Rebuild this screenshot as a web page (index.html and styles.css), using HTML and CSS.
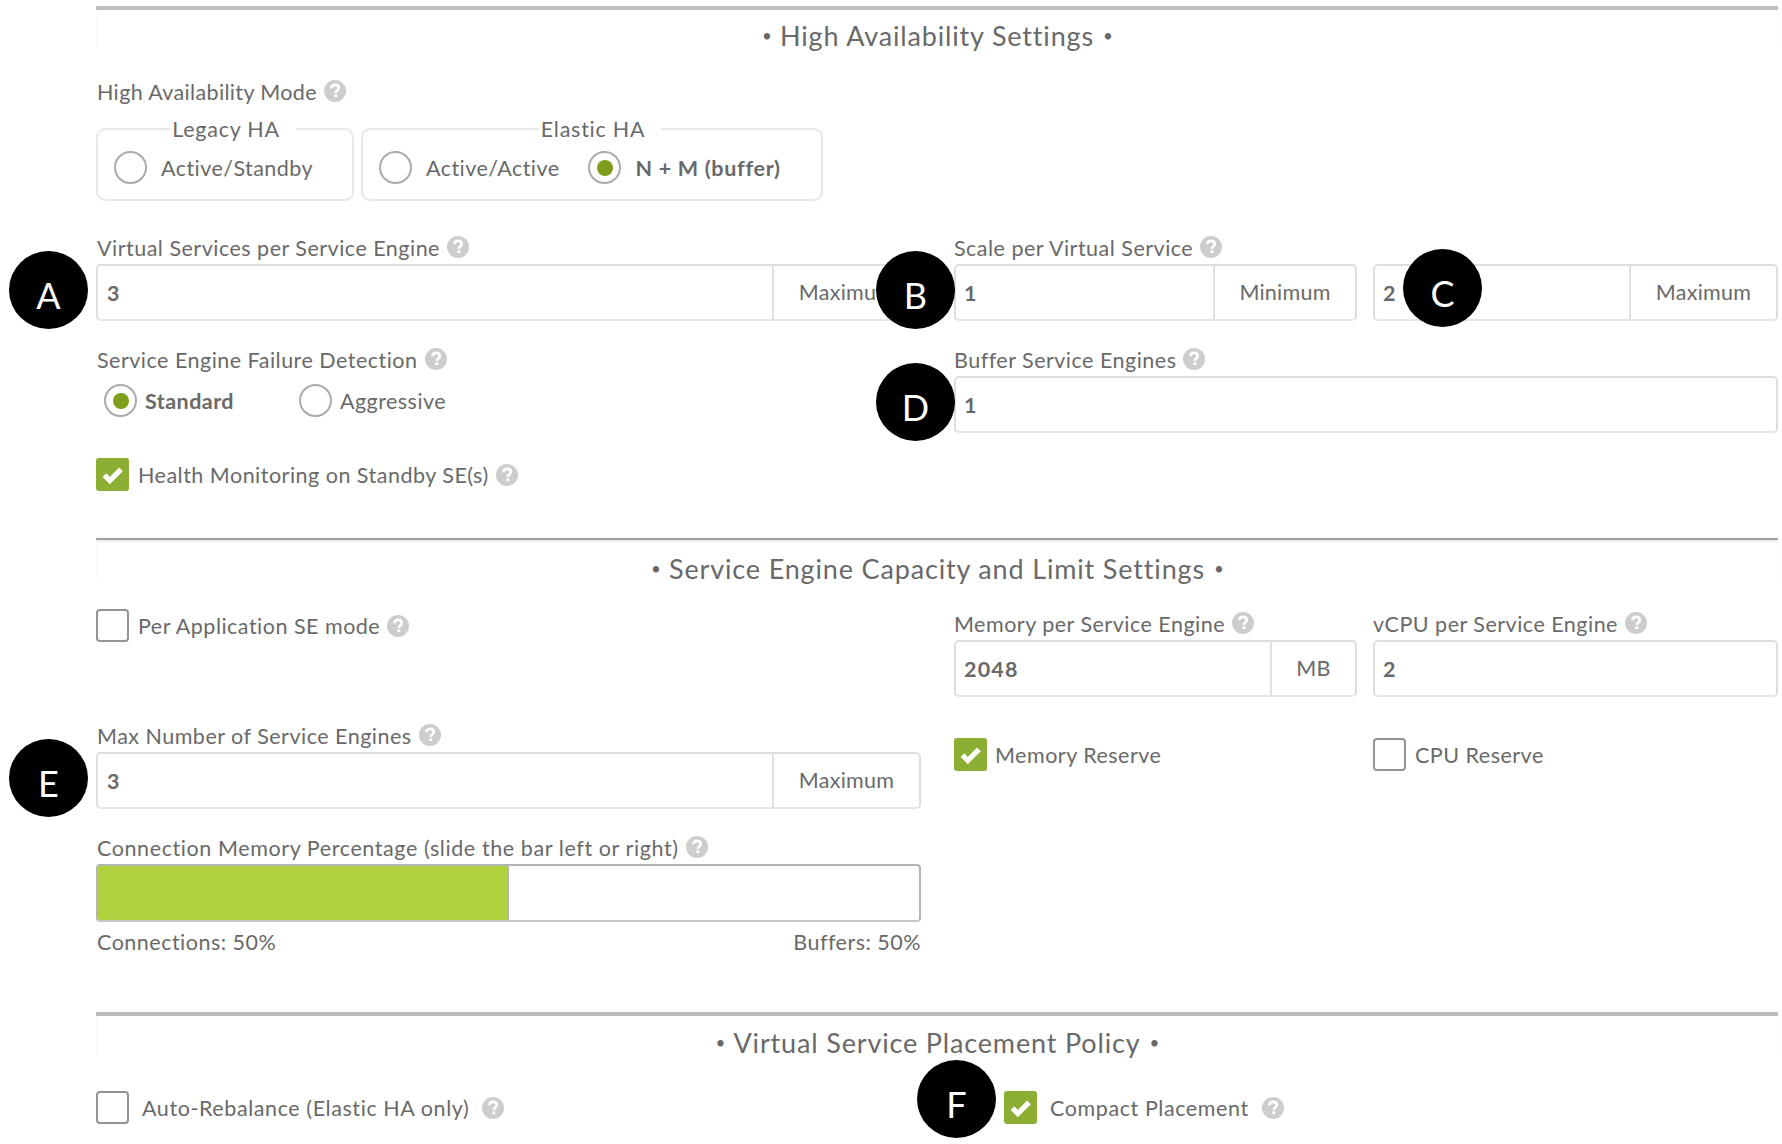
FILE: index.html
```html
<!DOCTYPE html>
<html lang="en">
<head>
<meta charset="utf-8">
<title>Service Engine Group</title>
<link rel="stylesheet" href="styles.css">
</head>
<body>
<svg width="0" height="0" class="defs">
  <symbol id="help" viewBox="0 0 22 22">
    <circle cx="11" cy="11" r="11" fill="#cdcdcd"/>
    <path d="M7.4 8.2C7.5 6 9 4.9 11.1 4.9c2.1 0 3.6 1.2 3.6 3 0 2.6-2.9 2.6-2.9 5" fill="none" stroke="#fff" stroke-width="2.7"/>
    <rect x="10.4" y="14.4" width="2.8" height="2.8" fill="#fff"/>
  </symbol>
  <symbol id="check" viewBox="0 0 32 32">
    <path d="M8.2 16.6l5.2 5.2L24.2 11" fill="none" stroke="#fff" stroke-width="5"/>
  </symbol>
</svg>
<main class="page">

  <section class="section section-ha">
    <h2 class="title"><span class="dot">•</span>High Availability Settings<span class="dot">•</span></h2>
    <div class="label mode-label"><span>High Availability Mode</span><svg class="help"><use href="#help"/></svg></div>
    <div class="modes">
      <fieldset class="mode legacy">
        <legend>Legacy HA</legend>
        <div class="choices">
          <span class="radio"></span><span class="choice">Active/Standby</span>
        </div>
      </fieldset>
      <fieldset class="mode elastic">
        <legend>Elastic HA</legend>
        <div class="choices">
          <span class="radio"></span><span class="choice">Active/Active</span>
          <span class="radio on"></span><span class="choice strong">N + M (buffer)</span>
        </div>
      </fieldset>
    </div>
    <div class="columns">
      <div class="column">
        <div class="field">
          <div class="label"><span>Virtual Services per Service Engine</span><svg class="help"><use href="#help"/></svg></div>
          <div class="input"><span class="value">3</span><span class="addon addon-max">Maximum</span></div>
          <span class="badge badge-a">A</span>
        </div>
        <div class="field">
          <div class="label"><span>Service Engine Failure Detection</span><svg class="help"><use href="#help"/></svg></div>
          <div class="detection">
            <span class="radio on"></span><span class="choice strong">Standard</span>
            <span class="radio"></span><span class="choice">Aggressive</span>
          </div>
        </div>
        <div class="checkline"><span class="box on"><svg><use href="#check"/></svg></span><span>Health Monitoring on Standby SE(s)</span><svg class="help"><use href="#help"/></svg></div>
      </div>
      <div class="column right">
        <div class="field">
          <div class="label"><span>Scale per Virtual Service</span><svg class="help"><use href="#help"/></svg></div>
          <div class="pair">
            <div class="input"><span class="value">1</span><span class="addon addon-min">Minimum</span></div>
            <div class="input"><span class="value">2</span><span class="addon addon-max">Maximum</span></div>
          </div>
          <span class="badge badge-b">B</span>
          <span class="badge badge-c">C</span>
        </div>
        <div class="field">
          <div class="label"><span>Buffer Service Engines</span><svg class="help"><use href="#help"/></svg></div>
          <div class="input"><span class="value">1</span></div>
          <span class="badge badge-d">D</span>
        </div>
      </div>
    </div>
  </section>

  <section class="section section-capacity">
    <h2 class="title"><span class="dot">•</span>Service Engine Capacity and Limit Settings<span class="dot">•</span></h2>
    <div class="columns">
      <div class="column">
        <div class="checkline app-mode"><span class="box"></span><span>Per Application SE mode</span><svg class="help"><use href="#help"/></svg></div>
        <div class="field">
          <div class="label"><span>Max Number of Service Engines</span><svg class="help"><use href="#help"/></svg></div>
          <div class="input"><span class="value">3</span><span class="addon addon-max">Maximum</span></div>
          <span class="badge badge-e">E</span>
        </div>
        <div class="field">
          <div class="label slider-label"><span>Connection Memory Percentage (slide the bar left or right)</span><svg class="help"><use href="#help"/></svg></div>
          <div class="slider"><div class="fill" style="width:50%"></div></div>
          <div class="captions"><span>Connections: 50%</span><span>Buffers: 50%</span></div>
        </div>
      </div>
      <div class="column right">
        <div class="pair">
          <div class="field">
            <div class="label"><span>Memory per Service Engine</span><svg class="help"><use href="#help"/></svg></div>
            <div class="input"><span class="value">2048</span><span class="addon addon-mb">MB</span></div>
          </div>
          <div class="field">
            <div class="label"><span>vCPU per Service Engine</span><svg class="help"><use href="#help"/></svg></div>
            <div class="input"><span class="value">2</span></div>
          </div>
        </div>
        <div class="pair reserves">
          <div class="checkline memory"><span class="box on"><svg><use href="#check"/></svg></span><span>Memory Reserve</span></div>
          <div class="checkline"><span class="box"></span><span>CPU Reserve</span></div>
        </div>
      </div>
    </div>
  </section>

  <section class="section section-placement">
    <h2 class="title"><span class="dot">•</span>Virtual Service Placement Policy<span class="dot">•</span></h2>
    <div class="placement">
      <div class="checkline"><span class="box"></span><span>Auto-Rebalance (Elastic HA only)</span><svg class="help"><use href="#help"/></svg></div>
      <div class="checkline"><span class="box on"><svg><use href="#check"/></svg></span><span>Compact Placement</span><svg class="help"><use href="#help"/></svg></div>
      <span class="badge badge-f">F</span>
    </div>
  </section>

</main>
</body>
</html>
```

FILE: styles.css
```css
* { box-sizing: border-box; }

body {
  margin: 0;
  background: #fff;
  color: #696969;
  font: 21.5px/26px Lato, "Liberation Sans", sans-serif;
  letter-spacing: 0.49px;
  overflow: hidden;
}

.defs { display: block; }

.page { width: 1682px; height: 1144px; margin-left: 96px; padding-top: 6px; }

/* Sections */
.section { display: flex; flex-direction: column; }
.section-ha { height: 532px; border-top: 4px solid #bfbfbf; }
.section-capacity { height: 474px; border-top: 2px solid #9f9f9f; box-shadow: inset 0 2px #ebebeb, 0 -2px #f8f8f8; }
.section-placement { height: 132px; border-top: 4px solid #bcbcbc; }

.title {
  display: flex;
  justify-content: center;
  gap: 9px;
  margin: 0;
  height: 40px;
  border: solid #f9f9f9;
  border-width: 0 1px;
  font-size: 27px;
  font-weight: 400;
  line-height: 52px;
  letter-spacing: 0.84px;
}
.section-capacity .title, .section-placement .title { line-height: 54px; }
.section-capacity .title { line-height: 57px; }
.dot { width: 9px; font-size: 17px; text-align: center; letter-spacing: 0; }

.columns { display: grid; grid-template-columns: 825px 824px; column-gap: 33px; }
.column { display: flex; flex-direction: column; }
.pair { display: grid; grid-template-columns: 403px 405px; column-gap: 16px; }

/* Labels and inputs */
.field { position: relative; margin-bottom: 21px; }
.label { display: flex; align-items: center; gap: 7px; height: 34px; padding-left: 1px; white-space: nowrap; }
.label > span { padding-top: 2px; }
.right .label { padding-left: 0; }
.help { flex: none; width: 22px; height: 22px; }

.input {
  display: flex;
  height: 57px;
  border: 2px solid #dedede;
  border-bottom-color: #e6e6e6;
  border-radius: 5px;
}
.value { flex: 1; padding-left: 9px; font-weight: 700; line-height: 54px; letter-spacing: 1.2px; }
.right .value { padding-left: 8px; }
.addon {
  border-left: 2px solid #e0e0e0;
  line-height: 53px;
  text-align: center;
  letter-spacing: 0.25px;
}
.addon-max { width: 147px; }
.addon-min { width: 142px; }
.addon-mb { width: 85px; }

/* High availability mode */
.mode-label { margin-top: 24px; letter-spacing: 0.36px; }
.modes { display: flex; gap: 7px; margin: 8px 0 29px; }
.mode {
  margin: 0;
  padding: 0 0 5px 16px;
  height: 85px;
  border: 2px solid #e8e8e8;
  border-radius: 9px;
}
.mode legend { margin: 0 auto; padding: 0 9px; position: relative; left: -7px; letter-spacing: 0.75px; }
.legacy { width: 258px; }
.elastic { width: 462px; }
.choices, .detection { display: flex; align-items: center; }
.choices { height: 51px; }
.detection { height: 49px; padding-left: 8px; }

.radio {
  flex: none;
  display: flex;
  align-items: center;
  justify-content: center;
  width: 33px;
  height: 33px;
  border: 2px solid #aaa;
  border-radius: 50%;
}
.radio.on::after { content: ""; width: 16px; height: 16px; border-radius: 50%; background: #7f9f1c; }
.choice { margin: 1px 29px 0 14px; letter-spacing: 0.45px; }
.choices .strong { letter-spacing: 0.7px; }
.strong { font-weight: 700; }
.detection .choice { margin: 1px 65px 0 8px; }

/* Checkboxes */
.checkline { display: flex; align-items: center; height: 33px; white-space: nowrap; }
.checkline .help { margin-left: 7px; }
.box {
  flex: none;
  width: 33px;
  height: 33px;
  margin-right: 9px;
  border: 2px solid #949494;
  border-radius: 4px;
}
.box.on { border: 0; background: #8bae33; border-radius: 3px; }
.box svg { display: block; width: 33px; height: 33px; }
.section-ha .checkline { margin-top: 12px; }

/* Capacity */
.section-capacity .columns { margin-top: 26px; }
.app-mode { margin: 3px 0 76px; }
.reserves { margin-top: 20px; }
.memory .box { margin-right: 8px; }

.slider-label > span { letter-spacing: 0.59px; }
.slider {
  height: 58px;
  border: 2px solid #b4b4b4;
  border-bottom-color: #c6c6c6;
  border-radius: 4px;
  overflow: hidden;
}
.fill { height: 100%; background: #afd13d; border-right: 2px solid #b4b4b4; }
.captions { display: flex; justify-content: space-between; padding: 7px 0 0 1px; }

/* Placement */
.placement {
  position: relative;
  display: grid;
  grid-template-columns: 908px 1fr;
  margin-top: 35px;
  letter-spacing: 0.58px;
}
.placement .box { margin-right: 13px; }
.placement .help { margin-left: 13px; }

/* Callout markers */
.badge {
  position: absolute;
  width: 79px;
  height: 78px;
  border-radius: 50%;
  background: #000;
  color: #fff;
  font-size: 36px;
  line-height: 88px;
  text-align: center;
  letter-spacing: 0;
}
.badge-a { left: -87px; top: 21px; }
.badge-b { left: -78px; top: 21px; }
.badge-c { left: 449px; top: 19px; }
.badge-d { left: -78px; top: 21px; }
.badge-e { left: -87px; top: 21px; }
.badge-f { left: 821px; top: -31px; }
```
